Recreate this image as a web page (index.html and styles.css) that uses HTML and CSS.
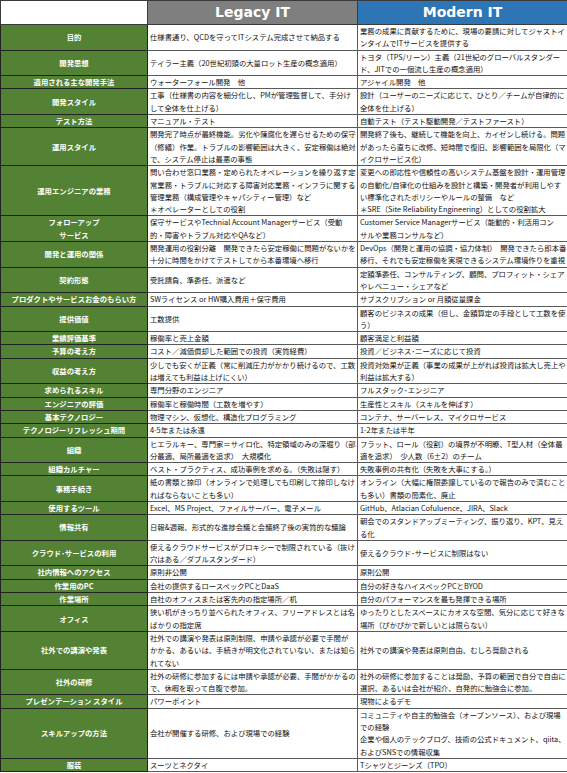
FILE: index.html
```html
<!DOCTYPE html>
<html lang="ja">
<head>
<meta charset="utf-8">
<title>Legacy IT vs Modern IT</title>
<link rel="stylesheet" href="styles.css">
</head>
<body>
<table class="cmp">
<colgroup><col class="c-label"><col class="c-legacy"><col class="c-modern"></colgroup>
<thead>
<tr><th class="h-blank"></th><th class="h-legacy">Legacy IT</th><th class="h-modern">Modern IT</th></tr>
</thead>
<tbody>
<tr><td class="label">目的</td><td>仕様書通り、QCDを守ってITシステム完成させて納品する</td><td>業務の成果に貢献するために、現場の要請に対してジャストイ<br>ンタイムでITサービスを提供する</td></tr>
<tr><td class="label">開発思想</td><td>テイラー主義（20世紀初頭の大量ロット生産の概念適用）</td><td>トヨタ（TPS/リーン）主義（21世紀のグローバルスタンダー<br>ド、JITでの一個流し生産の概念適用）</td></tr>
<tr><td class="label">適用される主な開発手法</td><td>ウォーターフォール開発　他</td><td>アジャイル開発　他</td></tr>
<tr><td class="label">開発スタイル</td><td>工事（仕様書の内容を細分化し、PMが管理監督して、手分け<br>して全体を仕上げる）</td><td>設計（ユーザーのニーズに応じて、ひとり／チームが自律的に<br>全体を仕上げる）</td></tr>
<tr><td class="label">テスト方法</td><td>マニュアル・テスト</td><td>自動テスト（テスト駆動開発／テストファースト）</td></tr>
<tr><td class="label">運用スタイル</td><td>開発完了時点が最終機能。劣化や陳腐化を遅らせるための保守<br>（修繕）作業。トラブルの影響範囲は大きく、安定稼働は絶対<br>で、システム停止は最悪の事態</td><td>開発終了後も、継続して機能を向上、カイゼンし続ける。問題<br>があったら直ちに改修、短時間で復旧、影響範囲を局限化（マ<br>イクロサービス化）</td></tr>
<tr><td class="label">運用エンジニアの業務</td><td>問い合わせ窓口業務・定められたオペレーションを繰り返す定<br>常業務・トラブルに対応する障害対応業務・インフラに関する<br>管理業務（構成管理やキャパシティー管理）など<br>＊オペレーターとしての役割</td><td>変更への即応性や信頼性の高いシステム基盤を設計・運用管理<br>の自動化/自律化の仕組みを設計と構築・開発者が利用しやす<br>い標準化されたポリシーやルールの整備　など<br>＊SRE（Site Reliability Engineering）としての役割拡大</td></tr>
<tr><td class="label">フォローアップ<br>サービス</td><td>保守サービスやTechnial Account Managerサービス（受動<br>的・障害やトラブル対応やQAなど）</td><td>Customer Service Managerサービス（能動的・利活用コン<br>サルや業務コンサルなど）</td></tr>
<tr><td class="label">開発と運用の関係</td><td>開発運用の役割分離　開発できたら安定稼働に問題がないかを<br>十分に時間をかけてテストしてから本番環境へ移行</td><td>DevOps（開発と運用の協調・協力体制）　開発できたら即本番<br>移行、それでも安定稼働を実現できるシステム環境作りを重視</td></tr>
<tr><td class="label">契約形態</td><td>受託請負、準委任、派遣など</td><td>定額準委任、コンサルティング、顧問、プロフィット・シェア<br>やレベニュー・シェアなど</td></tr>
<tr><td class="label">プロダクトやサービスお金のもらい方</td><td>SWライセンス or HW購入費用＋保守費用</td><td>サブスクリプション or 月額従量課金</td></tr>
<tr><td class="label">提供価値</td><td>工数提供</td><td>顧客のビジネスの成果（但し、金額算定の手段として工数を使<br>う）</td></tr>
<tr><td class="label">業績評価基準</td><td>稼働率と売上金額</td><td>顧客満足と利益額</td></tr>
<tr><td class="label">予算の考え方</td><td>コスト／減価償却した範囲での投資（実質経費）</td><td>投資／ビジネス･ニーズに応じて投資</td></tr>
<tr><td class="label">収益の考え方</td><td>少しでも安くが正義（常に削減圧力がかかり続けるので、工数<br>は増えても利益は上げにくい）</td><td>投資対効果が正義（事業の成果が上がれば投資は拡大し売上や<br>利益は拡大する）</td></tr>
<tr><td class="label">求められるスキル</td><td>専門分野のエンジニア</td><td>フルスタック･エンジニア</td></tr>
<tr><td class="label">エンジニアの評価</td><td>稼働率と稼働時間（工数を増やす）</td><td>生産性とスキル（スキルを伸ばす）</td></tr>
<tr><td class="label">基本テクノロジー</td><td>物理マシン、仮想化、構造化プログラミング</td><td>コンテナ、サーバーレス、マイクロサービス</td></tr>
<tr><td class="label">テクノロジーリフレッシュ期間</td><td>4-5年または永遠</td><td>1-2年または半年</td></tr>
<tr><td class="label">組織</td><td>ヒエラルキー、専門家＝サイロ化、特定領域のみの深堀り（部<br>分最適、局所最適を追求）　大規模化</td><td>フラット、ロール（役割）の境界が不明瞭、T型人材（全体最<br>適を追求）　少人数（6±2）のチーム</td></tr>
<tr><td class="label">組織カルチャー</td><td>ベスト・プラクティス、成功事例を求める。（失敗は隠す）</td><td>失敗事例の共有化（失敗を大事にする。）</td></tr>
<tr><td class="label">事務手続き</td><td>紙の書類と捺印（オンラインで処理しても印刷して捺印しなけ<br>ればならないことも多い）</td><td>オンライン（大幅に権限委譲しているので報告のみで済むこと<br>も多い）書類の簡素化、廃止</td></tr>
<tr><td class="label">使用するツール</td><td>Excel、MS Project、ファイルサーバー、電子メール</td><td>GitHub、Atlacian Cofuluence、JIRA、Slack</td></tr>
<tr><td class="label">情報共有</td><td>日報&amp;週報、形式的な進捗会議と会議終了後の実質的な議論</td><td>朝会でのスタンドアップミーティング、振り返り、KPT、見え<br>る化</td></tr>
<tr><td class="label">クラウド･サービスの利用</td><td>使えるクラウドサービスがプロキシーで制限されている（抜け<br>穴はある／ダブルスタンダード）</td><td>使えるクラウド･サービスに制限はない</td></tr>
<tr><td class="label">社内情報へのアクセス</td><td>原則非公開</td><td>原則公開</td></tr>
<tr><td class="label">作業用のPC</td><td>会社の提供するロースペックPCとDaaS</td><td>自分の好きなハイスペックPCとBYOD</td></tr>
<tr><td class="label">作業場所</td><td>自社のオフィスまたは客先内の指定場所／机</td><td>自分のパフォーマンスを最も発揮できる場所</td></tr>
<tr><td class="label">オフィス</td><td>狭い机がきっちり並べられたオフィス、フリーアドレスとは名<br>ばかりの指定席</td><td>ゆったりとしたスペースにカオスな空間、気分に応じて好きな<br>場所（ぴかぴかで新しいとは限らない）</td></tr>
<tr><td class="label">社外での講演や発表</td><td>社外での講演や発表は原則制限、申請や承認が必要で手間が<br>かかる、あるいは、手続きが明文化されていない、または知ら<br>れてない</td><td>社外での講演や発表は原則自由、むしろ奨励される</td></tr>
<tr><td class="label">社外の研修</td><td>社外の研修に参加するには申請や承認が必要、手間がかかるの<br>で、休暇を取って自腹で参加。</td><td>社外の研修に参加することは奨励、予算の範囲で自分で自由に<br>選択、あるいは会社が紹介、自発的に勉強会に参加。</td></tr>
<tr><td class="label">プレゼンテーション スタイル</td><td>パワーポイント</td><td>現物によるデモ</td></tr>
<tr><td class="label">スキルアップの方法</td><td>会社が開催する研修、および現場での経験</td><td>コミュニティや自主的勉強会（オープンソース）、および現場<br>での経験<br>企業や個人のテックブログ、技術の公式ドキュメント、qiita、<br>およびSNSでの情報収集</td></tr>
<tr><td class="label">服装</td><td>スーツとネクタイ</td><td>Tシャツとジーンズ（TPO）</td></tr>
</tbody>
</table>
</body>
</html>
```
FILE: styles.css
```css
html, body {
  margin: 0;
  padding: 0;
  background: #ffffff;
}

.cmp {
  width: 567px;
  border-collapse: collapse;
  table-layout: fixed;
  font-family: "Noto Sans CJK JP", "Noto Sans", sans-serif;
  font-size: 7.35px;
  line-height: 12.3px;
  color: #111111;
}

.c-label { width: 147px; }
.c-legacy { width: 210px; }
.c-modern { width: 210px; }

.cmp th {
  height: 23px;
  padding: 0;
  font-family: "DejaVu Sans", sans-serif;
  font-size: 14px;
  font-weight: bold;
  color: #ffffff;
  text-align: center;
  vertical-align: middle;
  border: 1px solid #3a3a3a;
}

.h-blank {
  background: #ffffff;
  border-color: #bfbfbf;
  border-right-color: #3a3a3a;
}

.h-legacy { background: #7f7f7f; }
.h-modern { background: #2e75b6; }

.cmp td {
  border: 1px solid #5a5a5a;
  padding: 0 0 0 2px;
  vertical-align: middle;
  white-space: nowrap;
  overflow: hidden;
}

.cmp td.label {
  background: #548235;
  color: #ffffff;
  text-align: center;
  font-weight: bold;
  padding: 0;
  border-color: #222222;
}
```
